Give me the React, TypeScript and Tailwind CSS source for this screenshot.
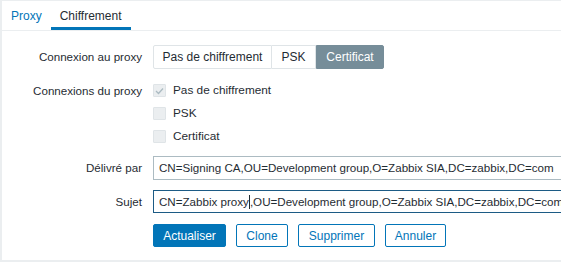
import React from "react";

const font = { fontFamily: '"Liberation Sans", Arial, sans-serif' };

function Row({ label, children, className = "" }: { label: string; children: React.ReactNode; className?: string }) {
  return (
    <div className={`flex items-center ${className}`}>
      <div className="w-[140px] shrink-0 text-right text-[11.6px] text-[#1f2c33]">{label}</div>
      <div className="ml-[11px] flex items-center">{children}</div>
    </div>
  );
}

function Check({ checked, label }: { checked?: boolean; label: string }) {
  return (
    <div className="flex h-[23px] items-center">
      <div className="flex h-[13px] w-[13px] items-center justify-center rounded-[1px] border border-[#dfe4e7] bg-[#ebeef0]">
        {checked && (
          <svg width="9" height="8" viewBox="0 0 9 8">
            <path d="M1 4 L3.5 6.5 L8 1.5" fill="none" stroke="#acbbc2" strokeWidth="1.3" />
          </svg>
        )}
      </div>
      <span className="ml-[7px] text-[11.8px] text-[#1f2c33]">{label}</span>
    </div>
  );
}

export default function App() {
  return (
    <div style={font} className="h-[262px] w-[561px] overflow-hidden bg-[#ebeef0] pl-[2px] pt-[1px] pb-[2px]">
      <div className="h-[259px] w-[600px] bg-white">
        <div className="flex h-[30px] border-b border-[#ebeef0] text-[12px]">
          <div className="flex h-full items-center px-[9px] text-[#0275b8]">Proxy</div>
          <div className="flex h-full items-center border-b-[3px] border-[#0275b8] px-[9px] pt-[3px] text-[#1f2c33]">Chiffrement</div>
        </div>
        <div className="pt-[14px]">
          <Row label="Connexion au proxy" className="h-[24px]">
            <div className="flex h-[24px] text-[12px]">
              <div className="flex w-[119px] items-center justify-center rounded-l-[2px] border border-[#dfe4e7] text-[#1f2c33]">Pas de chiffrement</div>
              <div className="flex w-[44px] items-center justify-center border-y border-r border-[#dfe4e7] text-[#1f2c33]">PSK</div>
              <div className="flex w-[68px] items-center justify-center rounded-r-[2px] border border-[#768d99] bg-[#768d99] text-white">Certificat</div>
            </div>
          </Row>
          <div className="mt-[10px] flex">
            <div className="flex h-[23px] w-[140px] shrink-0 items-center justify-end text-[11.6px] text-[#1f2c33]">Connexions du proxy</div>
            <div className="ml-[11px] flex flex-col">
              <Check checked label="Pas de chiffrement" />
              <Check label="PSK" />
              <Check label="Certificat" />
            </div>
          </div>
          <Row label="Délivré par" className="mt-[8px] h-[24px]">
            <div className="flex h-[24px] w-[454px] items-center whitespace-nowrap border border-[#acbbc2] px-[5px] text-[11.6px] text-[#1f2c33]">
              CN=Signing CA,OU=Development group,O=Zabbix SIA,DC=zabbix,DC=com
            </div>
          </Row>
          <Row label="Sujet" className="mt-[10px] h-[23px]">
            <div className="flex h-[23px] w-[454px] items-center whitespace-nowrap border border-[#1c5b85] px-[5px] text-[11.6px] text-[#1f2c33]">
              <span>CN=Zabbix proxy</span>
              <span className="inline-block h-[14px] w-[1px] bg-[#1f2c33]" />
              <span>,OU=Development group,O=Zabbix SIA,DC=zabbix,DC=com</span>
            </div>
          </Row>
          <div className="ml-[151px] mt-[11px] flex gap-[10px] text-[12px]">
            <div className="flex h-[23px] w-[73px] items-center justify-center rounded-[2px] border border-[#0275b8] bg-[#0275b8] text-white">Actualiser</div>
            <div className="flex h-[23px] w-[52px] items-center justify-center rounded-[2px] border border-[#0275b8] text-[#0275b8]">Clone</div>
            <div className="flex h-[23px] w-[77px] items-center justify-center rounded-[2px] border border-[#0275b8] text-[#0275b8]">Supprimer</div>
            <div className="flex h-[23px] w-[61px] items-center justify-center rounded-[2px] border border-[#0275b8] text-[#0275b8]">Annuler</div>
          </div>
        </div>
      </div>
    </div>
  );
}
